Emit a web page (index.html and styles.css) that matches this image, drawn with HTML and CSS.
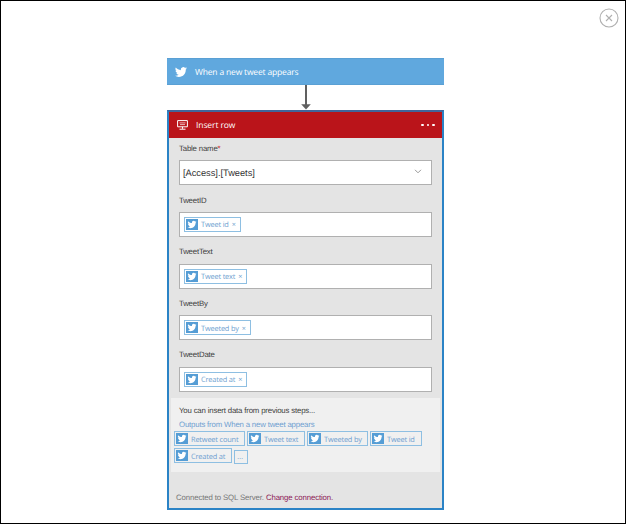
FILE: index.html
```html
<!DOCTYPE html>
<html lang="en">
<head>
<meta charset="utf-8">
<title>Insert row</title>
<link rel="stylesheet" href="styles.css">
</head>
<body>
<svg class="defs" aria-hidden="true">
  <symbol id="bird" viewBox="0 0 24 24"><path fill="currentColor" d="M23.95 4.57a10 10 0 0 1-2.82.77 4.96 4.96 0 0 0 2.16-2.72c-.95.55-2 .95-3.13 1.18a4.92 4.92 0 0 0-8.38 4.48C7.69 8.09 4.07 6.13 1.64 3.16a4.93 4.93 0 0 0 1.52 6.57 4.9 4.9 0 0 1-2.23-.61v.06a4.92 4.92 0 0 0 3.95 4.83 5 5 0 0 1-2.21.08 4.94 4.94 0 0 0 4.6 3.42A9.87 9.87 0 0 1 0 19.54a13.99 13.99 0 0 0 7.55 2.21c9.05 0 14-7.5 14-13.98 0-.21 0-.42-.02-.63a9.94 9.94 0 0 0 2.42-2.57z"/></symbol>
</svg>
<main class="frame">
  <svg class="close" viewBox="0 0 20 20"><circle cx="10" cy="10" r="9"/><path d="M7 7l6 6M13 7l-6 6"/></svg>
  <div class="flow">
    <div class="trigger"><svg class="trigger-icon"><use href="#bird"/></svg><span class="title">When a new tweet appears</span></div>
    <svg class="arrow" viewBox="0 0 12 25"><path d="M6 0v20" stroke="#606060" stroke-width="2"/><path d="M1.2 19.2h9.6L6 24.5z" fill="#606060"/></svg>
    <section class="card">
      <header class="card-head">
        <svg class="db" viewBox="0 0 11 10"><path d="M.6.6h9.8v6.2H.6zM5.5 6.8v2M2.5 9.2h6" fill="none" stroke="#fff"/><path d="M2.5 2.9h6M3 4.6h5" stroke="#fff" stroke-width=".9" opacity=".75"/></svg>
        <span class="title">Insert row</span>
        <span class="dots"><i></i><i></i><i></i></span>
      </header>
      <div class="fields">
        <div class="field"><label>Table name<b>*</b></label>
          <div class="box select"><span>[Access].[Tweets]</span><svg class="chev" viewBox="0 0 8 5"><path d="M1 .8l3 3 3-3"/></svg></div></div>
        <div class="field"><label>TweetID</label>
          <div class="box"><span class="chip w-id"><svg><use href="#bird"/></svg><span>Tweet id</span><em>×</em></span></div></div>
        <div class="field"><label>TweetText</label>
          <div class="box"><span class="chip w-text"><svg><use href="#bird"/></svg><span>Tweet text</span><em>×</em></span></div></div>
        <div class="field"><label>TweetBy</label>
          <div class="box"><span class="chip w-by"><svg><use href="#bird"/></svg><span>Tweeted by</span><em>×</em></span></div></div>
        <div class="field"><label>TweetDate</label>
          <div class="box"><span class="chip w-at"><svg><use href="#bird"/></svg><span>Created at</span><em>×</em></span></div></div>
      </div>
      <div class="outputs">
        <p class="hint">You can insert data from previous steps...</p>
        <p class="source">Outputs from When a new tweet appears</p>
        <div class="row">
          <span class="chip o-count"><svg><use href="#bird"/></svg><span>Retweet count</span></span>
          <span class="chip o-text"><svg><use href="#bird"/></svg><span>Tweet text</span></span>
          <span class="chip o-by"><svg><use href="#bird"/></svg><span>Tweeted by</span></span>
          <span class="chip o-id"><svg><use href="#bird"/></svg><span>Tweet id</span></span>
        </div>
        <div class="row">
          <span class="chip o-at"><svg><use href="#bird"/></svg><span>Created at</span></span>
          <span class="more">...</span>
        </div>
      </div>
      <footer>Connected to SQL Server. <a>Change connection.</a></footer>
    </section>
  </div>
</main>
</body>
</html>
```
FILE: styles.css
```css
* { box-sizing: border-box; }
body { margin: 0; font-family: "Liberation Sans", Arial, sans-serif; font-size: 7.8px; letter-spacing: -.17px; color: #404040; background: #fff; text-rendering: geometricPrecision; }
p { margin: 0; }
.defs { position: absolute; width: 0; height: 0; }
.frame { position: relative; width: 626px; height: 524px; border: 1px solid #000; padding: 57px 0 0 166px; overflow: hidden; }
.close { position: absolute; left: 598px; top: 7px; width: 20px; height: 20px; fill: none; stroke: #b0b0b0; stroke-width: 1.1; }
.flow { width: 277px; }
.trigger { display: flex; align-items: center; height: 27px; padding-left: 8px; background: #60a8de; color: #fff; border: 1px solid #5aa0d4; border-width: 1px 0; font: 8.5px "Open Sans", sans-serif; letter-spacing: -.17px; }
.trigger-icon { width: 12px; height: 12px; margin-right: 8px; }
.arrow { display: block; width: 12px; height: 25px; margin-left: 133px; }
.card { height: 400px; border: 2px solid #2b83c6; border-top-color: #41659b; background: #e4e4e4; }
.card-head { display: flex; align-items: center; height: 26px; padding: 0 7px 0 8px; background: #ba141a; color: #fff; font: 8.5px "Open Sans", sans-serif; letter-spacing: -.1px; }
.db { width: 11px; height: 10px; margin-right: 8px; }
.title { padding-top: 1px; }
.dots { display: flex; gap: 3px; margin-left: auto; }
.dots i { width: 2.6px; height: 2.6px; border-radius: 50%; background: #fff; }
.fields { padding: 5px 10px 0; height: 260px; }
.field { height: 51.6px; }
label { display: block; height: 12px; line-height: 12px; margin-bottom: 5.4px; }
label b { color: #c33; font-weight: normal; }
.box { display: flex; align-items: center; height: 25px; padding-left: 3.5px; border: 1px solid #b0b0b0; background: #fff; }
.select { justify-content: space-between; padding: 0 9px 0 3px; font-size: 9.3px; letter-spacing: -.03px; color: #333; }
.chev { width: 8px; height: 5px; margin-top: -2px; fill: none; stroke: #999; }
.chip { display: flex; align-items: center; flex: none; height: 15px; padding-left: 1.5px; border: 1px solid #8ebfe2; color: #6f9fd0; font: 7.4px "Open Sans", sans-serif; letter-spacing: -.17px; white-space: nowrap; }
.chip svg { flex: none; width: 12px; height: 11px; padding: 1px; margin-right: 3px; background: #559dd5; color: #fff; }
.chip span { position: relative; top: 1px; }
.chip em { font-style: normal; margin-left: 3px; position: relative; top: 1px; }
.w-id { width: 57px; } .w-text, .w-at { width: 63px; } .w-by { width: 67px; }
.outputs { height: 74px; margin: 0 2px; padding: 7px 3px 0; background: #f0f0f0; }
.hint, .source { padding-left: 5px; line-height: 12px; }
.source { margin: 2px 0 0; color: #6f9fd0; }
.row { display: flex; gap: 2px; margin-bottom: 2px; }
.o-count { width: 71px; } .o-text { width: 58px; } .o-by { width: 61px; } .o-id { width: 52px; } .o-at { width: 58px; }
.row .chip { padding-left: 1px; }
.more { width: 14px; height: 14px; margin-top: 2px; padding-left: 2px; border: 1px solid #8ebfe2; color: #6f9fd0; line-height: 12px; }
footer { padding: 20px 0 0 7px; line-height: 12px; letter-spacing: -.12px; color: #777; }
footer a { color: #8c2055; }
```
